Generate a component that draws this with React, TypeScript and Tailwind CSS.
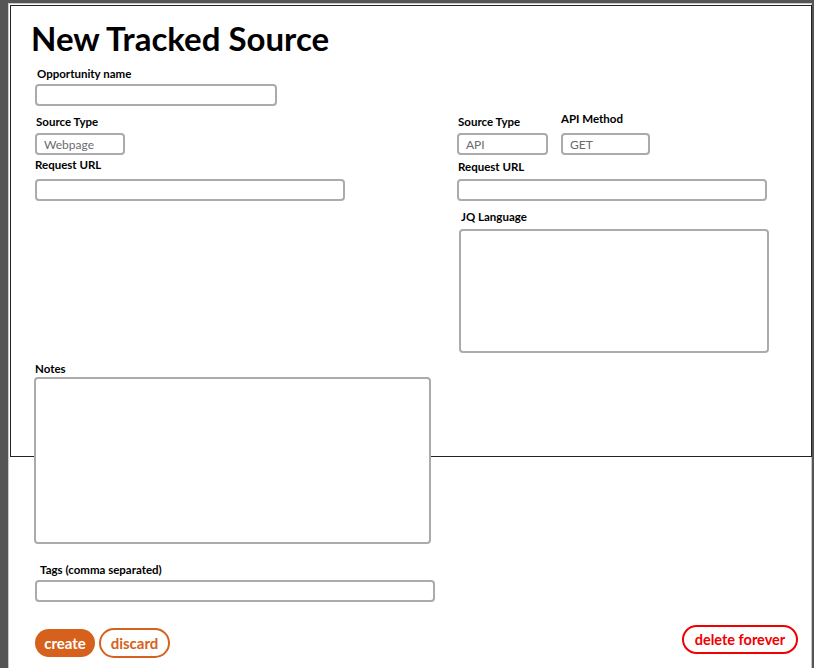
import React from 'react';

const font = { fontFamily: 'Lato, "Open Sans", sans-serif' };

function Label({ children, className = '' }: { children: React.ReactNode; className?: string }) {
  return <div className={`text-[11.5px] leading-[14px] font-bold text-black ${className}`}>{children}</div>;
}

function Field({ value = '', className = '' }: { value?: string; className?: string }) {
  return (
    <input
      readOnly
      value={value}
      className={`block h-[22px] rounded-[4px] border-2 border-[#ababab] bg-white px-[7px] text-[12px] text-[#6b6b6b] outline-none ${className}`}
      style={font}
    />
  );
}

function Area({ className = '' }: { className?: string }) {
  return <textarea readOnly className={`block resize-none rounded-[4px] border-2 border-[#ababab] bg-white outline-none ${className}`} />;
}

export default function App() {
  return (
    <div className="h-[668px] w-[814px] overflow-hidden bg-[#555555] pl-[8px] pt-[3px] pr-[2px]" style={font}>
      <div className="h-full border-l border-t border-r border-[#c8c8c8] bg-white pl-[1px] pt-[1px]">
        <div className="h-[452px] w-[802px] border border-[#222222] pl-[20px] pr-[13px] pt-[12px]">
          <h1 className="text-[33px] leading-[40px] font-bold text-black">New Tracked Source</h1>

          <div className="-mt-[2px] flex">
            {/* left column */}
            <div className="w-[422px]">
              <Label className="mt-[11px] ml-[6px]">Opportunity name</Label>
              <Field className="mt-[3px] ml-[4px] w-[242px]" />

              <Label className="mt-[9px] ml-[5px]">Source Type</Label>
              <Field value="Webpage" className="mt-[4px] ml-[4px] w-[90px]" />

              <Label className="mt-[3px] ml-[4px]">Request URL</Label>
              <Field className="mt-[7px] ml-[4px] w-[310px]" />
            </div>

            {/* right column */}
            <div className="w-[340px]">
              <div className="mt-[56px] flex items-start">
                <div className="ml-[4px] w-[104px]">
                  <Label className="mt-[3px] ml-[1px]">Source Type</Label>
                  <Field value="API" className="mt-[4px] w-[91px]" />
                </div>
                <div>
                  <Label>API Method</Label>
                  <Field value="GET" className="mt-[7px] w-[89px] px-[5px]" />
                </div>
              </div>

              <Label className="mt-[5px] ml-[5px]">Request URL</Label>
              <Field className="mt-[5px] ml-[4px] w-[310px]" />

              <Label className="mt-[9px] ml-[8px]">JQ Language</Label>
              <Area className="mt-[5px] ml-[6px] h-[124px] w-[310px]" />
            </div>
          </div>

          <Label className="mt-[9px] ml-[4px]">Notes</Label>
          <Area className="mt-[1px] ml-[3px] h-[167px] w-[397px]" />

          <Label className="mt-[19px] ml-[9px]">Tags (comma separated)</Label>
          <Field className="mt-[3px] ml-[4px] w-[400px]" />

          <div className="mt-[23px] flex items-start justify-between">
            <div className="mt-[3px] ml-[4px] flex items-center gap-[4px]">
              <button className="h-[28px] w-[60px] rounded-full bg-[#d6611c] text-[15px] font-bold text-white">create</button>
              <button className="h-[30px] w-[71px] rounded-full border-2 border-[#d6611c] text-[15px] font-bold text-[#d6611c]">discard</button>
            </div>
            <button className="h-[29px] w-[116px] rounded-full border-2 border-[#f00000] text-[14.5px] font-bold text-[#f00000]">delete forever</button>
          </div>
        </div>
      </div>
    </div>
  );
}
